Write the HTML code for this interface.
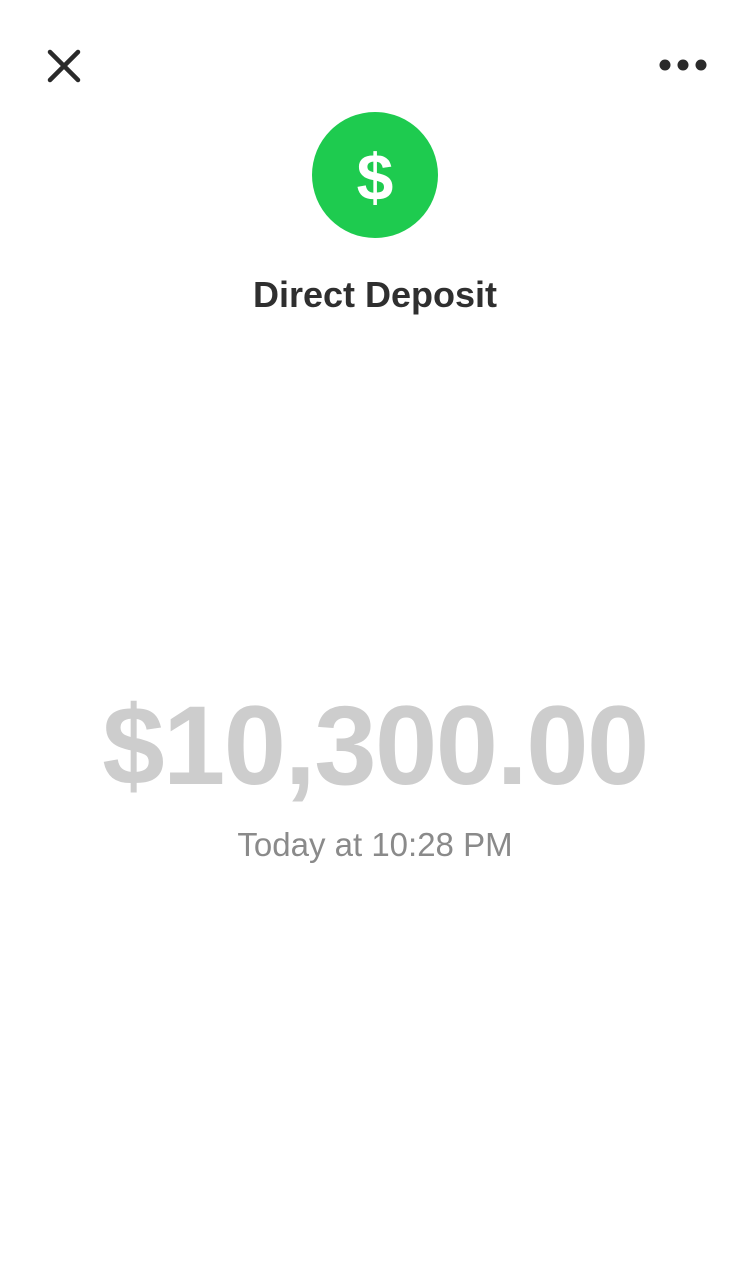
<!DOCTYPE html>
<html><head><style>
html,body{margin:0;padding:0;background:#fff;width:750px;height:1280px;overflow:hidden;font-family:"Liberation Sans",sans-serif;}
.abs{position:absolute}
</style></head><body>
<svg class="abs" style="left:46px;top:48px" width="36" height="36" viewBox="0 0 36 36"><path d="M4 4L32 32M32 4L4 32" stroke="#2a2a2a" stroke-width="4.5" stroke-linecap="round"/></svg>
<svg class="abs" style="left:658px;top:57px" width="52" height="16"><circle cx="7" cy="8" r="5.5" fill="#2a2a2a"/><circle cx="25" cy="8" r="5.5" fill="#2a2a2a"/><circle cx="43" cy="8" r="5.5" fill="#2a2a2a"/></svg>
<div class="abs" style="left:312px;top:112px;width:126px;height:126px;border-radius:50%;background:#1ecb4f;color:#fff;font-weight:bold;font-size:66px;line-height:130px;text-align:center">$</div>
<div class="abs" style="left:0;top:274px;width:750px;text-align:center;font-size:36px;font-weight:bold;color:#2f2f2f">Direct Deposit</div>
<div class="abs" style="left:0;top:686px;width:750px;text-align:center;font-size:112px;font-weight:bold;color:#cdcdcd;letter-spacing:-1.5px;line-height:120px">$10,300.00</div>
<div class="abs" style="left:0;top:826px;width:750px;text-align:center;font-size:33px;color:#8a8a8a">Today at 10:28 PM</div>
</body></html>
